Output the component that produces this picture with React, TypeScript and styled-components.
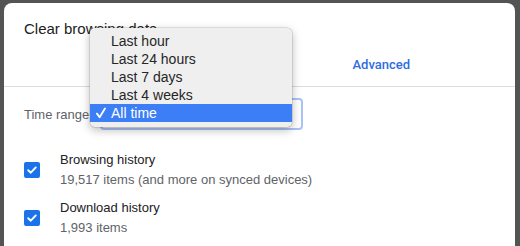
import React from "react"
import styled, { createGlobalStyle } from "styled-components"

const GlobalStyle = createGlobalStyle`
  html, body {
    margin: 0;
    padding: 0;
    background: #545454;
  }
  body {
    width: 520px;
    height: 246px;
    overflow: hidden;
    font-family: "Liberation Sans", Arial, sans-serif;
  }
`

const Dialog = styled.div`
  position: relative;
  margin: 3px 0 0 4px;
  width: 511px;
  height: 243px;
  background: #fff;
  border-radius: 8px 8px 0 0;
  overflow: hidden;
`

const Title = styled.h1`
  margin: 0;
  padding: 16px 20px 0;
  font-size: 15px;
  line-height: 20px;
  font-weight: 400;
  color: #202124;
`

const Tabs = styled.div`
  display: grid;
  grid-template-columns: 1fr 1fr;
  height: 47px;
  padding-right: 8px;
  border-bottom: 1px solid #dadce0;
`

const Tab = styled.div<{ $active?: boolean }>`
  padding-top: 18px;
  text-align: center;
  font-family: Roboto, "Liberation Sans", sans-serif;
  font-size: 13px;
  line-height: 16px;
  font-weight: 500;
  color: ${({ $active }) => ($active ? "#2f6de1" : "#5f6368")};
`

const Body = styled.div`
  padding: 11px 20px 0;
`

const RangeRow = styled.div`
  display: flex;
  align-items: center;
  height: 32px;
  gap: 10px;
`

const Label = styled.span`
  font-size: 13px;
  color: #5f6368;
`

const Select = styled.div`
  box-sizing: border-box;
  width: 203px;
  height: 32px;
  margin-left: 1px;
  border: 2px solid #a8c4f7;
  border-radius: 4px;
  display: flex;
  align-items: center;
  justify-content: flex-end;
  padding-right: 8px;
  font-size: 7px;
  color: #8a8d91;
`

const Items = styled.div`
  display: flex;
  flex-direction: column;
  gap: 8px;
  margin-top: 20px;
`

const Item = styled.div`
  display: flex;
  align-items: center;
  gap: 20px;
`

const Box = styled.span`
  width: 16px;
  height: 16px;
  border-radius: 2px;
  background: #1a73e8;
  display: flex;
  align-items: center;
  justify-content: center;
  flex: none;
`

const Lines = styled.div`
  font-size: 13px;
  line-height: 20px;
`

const Name = styled.div`
  color: #202124;
`

const Detail = styled.div`
  color: #5f6368;
`

const Menu = styled.ul`
  position: absolute;
  left: 86px;
  top: 25px;
  width: 202px;
  margin: 0;
  padding: 4px 0 5px;
  list-style: none;
  background: #efefef;
  border-radius: 5px;
  box-shadow: 0 0 0 0.5px rgba(0, 0, 0, 0.18), 0 3px 10px rgba(0, 0, 0, 0.28);
  font-family: "Liberation Sans", Arial, sans-serif;
  font-size: 14px;
`

const MenuItem = styled.li<{ $selected?: boolean }>`
  height: 18px;
  line-height: 18px;
  padding-left: 21px;
  position: relative;
  color: ${({ $selected }) => ($selected ? "#fff" : "#262626")};
  background: ${({ $selected }) => ($selected ? "#3b7ef6" : "transparent")};
`

const Tick = styled.svg`
  position: absolute;
  left: 6px;
  top: 3px;
`

const CheckIcon = () => (
  <svg width="12" height="12" viewBox="0 0 12 12">
    <path d="M2.2 6.2 L4.8 8.7 L9.8 3.4" stroke="#fff" strokeWidth="1.9" fill="none" strokeLinecap="round" strokeLinejoin="round" />
  </svg>
)

const MenuTick = () => (
  <Tick width="10" height="12" viewBox="0 0 10 12">
    <path d="M1 6.6 L3.6 10.2 L9 1.5" stroke="#fff" strokeWidth="1.8" fill="none" strokeLinecap="round" strokeLinejoin="round" />
  </Tick>
)

const ranges = ["Last hour", "Last 24 hours", "Last 7 days", "Last 4 weeks", "All time"]

const history = [
  { name: "Browsing history", detail: "19,517 items (and more on synced devices)" },
  { name: "Download history", detail: "1,993 items" },
]

export default function App() {
  return (
    <>
      <GlobalStyle />
      <Dialog>
        <Title>Clear browsing data</Title>
        <Tabs>
          <Tab $active={false}>Basic</Tab>
          <Tab $active>Advanced</Tab>
        </Tabs>
        <Body>
          <RangeRow>
            <Label>Time range</Label>
            <Select>▼</Select>
          </RangeRow>
          <Items>
            {history.map((h) => (
              <Item key={h.name}>
                <Box>
                  <CheckIcon />
                </Box>
                <Lines>
                  <Name>{h.name}</Name>
                  <Detail>{h.detail}</Detail>
                </Lines>
              </Item>
            ))}
          </Items>
        </Body>
        <Menu>
          {ranges.map((r) => (
            <MenuItem key={r} $selected={r === "All time"}>
              {r === "All time" && <MenuTick />}
              {r}
            </MenuItem>
          ))}
        </Menu>
      </Dialog>
    </>
  )
}
